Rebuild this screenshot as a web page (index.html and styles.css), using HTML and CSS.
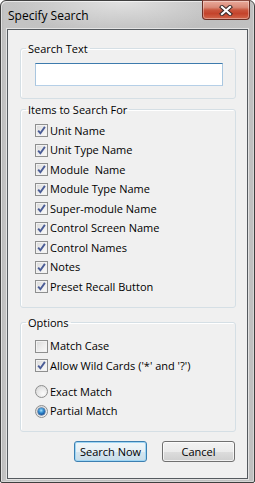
FILE: index.html
```html
<!DOCTYPE html>
<html>
<head>
<meta charset="utf-8">
<link rel="stylesheet" href="styles.css">
</head>
<body>
<div class="window">
  <div class="titlebar">
    <span class="title">Specify Search</span>
    <div class="close">
      <svg width="14" height="11" viewBox="0 0 14 11">
        <path d="M3 2 L11 9 M11 2 L3 9" stroke="#3a2a28" stroke-width="4.2" stroke-linecap="square" fill="none"/>
        <path d="M3 2 L11 9 M11 2 L3 9" stroke="#ffffff" stroke-width="2.2" stroke-linecap="square" fill="none"/>
      </svg>
    </div>
  </div>
  <div class="client">
    <fieldset class="group g-search">
      <legend>Search Text</legend>
      <div class="textbox"></div>
    </fieldset>

    <fieldset class="group g-items">
      <legend>Items to Search For</legend>
      <div class="row"><span class="cb on"><svg viewBox="0 0 11 11"><path d="M2.2 5.6 L4.4 8.3 L8.9 1.9"/></svg></span><span class="lbl">Unit Name</span></div>
      <div class="row"><span class="cb on"><svg viewBox="0 0 11 11"><path d="M2.2 5.6 L4.4 8.3 L8.9 1.9"/></svg></span><span class="lbl">Unit Type Name</span></div>
      <div class="row"><span class="cb on"><svg viewBox="0 0 11 11"><path d="M2.2 5.6 L4.4 8.3 L8.9 1.9"/></svg></span><span class="lbl">Module&nbsp; Name</span></div>
      <div class="row"><span class="cb on"><svg viewBox="0 0 11 11"><path d="M2.2 5.6 L4.4 8.3 L8.9 1.9"/></svg></span><span class="lbl">Module Type Name</span></div>
      <div class="row"><span class="cb on"><svg viewBox="0 0 11 11"><path d="M2.2 5.6 L4.4 8.3 L8.9 1.9"/></svg></span><span class="lbl">Super-module Name</span></div>
      <div class="row"><span class="cb on"><svg viewBox="0 0 11 11"><path d="M2.2 5.6 L4.4 8.3 L8.9 1.9"/></svg></span><span class="lbl">Control Screen Name</span></div>
      <div class="row"><span class="cb on"><svg viewBox="0 0 11 11"><path d="M2.2 5.6 L4.4 8.3 L8.9 1.9"/></svg></span><span class="lbl">Control Names</span></div>
      <div class="row"><span class="cb on"><svg viewBox="0 0 11 11"><path d="M2.2 5.6 L4.4 8.3 L8.9 1.9"/></svg></span><span class="lbl">Notes</span></div>
      <div class="row"><span class="cb on"><svg viewBox="0 0 11 11"><path d="M2.2 5.6 L4.4 8.3 L8.9 1.9"/></svg></span><span class="lbl">Preset Recall Button</span></div>
    </fieldset>

    <fieldset class="group g-options">
      <legend>Options</legend>
      <div class="row"><span class="cb"></span><span class="lbl">Match Case</span></div>
      <div class="row"><span class="cb on"><svg viewBox="0 0 11 11"><path d="M2.2 5.6 L4.4 8.3 L8.9 1.9"/></svg></span><span class="lbl">Allow Wild Cards ('*' and '?')</span></div>
      <div class="radios">
        <div class="row"><span class="rb"></span><span class="lbl">Exact Match</span></div>
        <div class="row"><span class="rb on"><span class="dot"></span></span><span class="lbl">Partial Match</span></div>
      </div>
    </fieldset>

    <div class="buttons">
      <div class="btn default">Search Now</div>
      <div class="btn">Cancel</div>
    </div>
  </div>
</div>
</body>
</html>
```
FILE: styles.css
```css
* { box-sizing: border-box; }
html, body { margin: 0; padding: 0; background: #ffffff; }
body {
  font-family: "Open Sans", "Liberation Sans", sans-serif;
  font-size: 11px;
  color: #000;
}
.window {
  width: 255px;
  height: 483px;
  border: 1px solid #3f3f3f;
  border-radius: 6px 6px 2px 2px;
  padding: 0 6px 3px 6px;
  display: flex;
  flex-direction: column;
  background:
    radial-gradient(ellipse 110px 34px at 48% 0, rgba(255,255,255,0.55), rgba(255,255,255,0) 100%),
    linear-gradient(90deg, #b4b4b4 0, #c4c4c4 3px, #bdbdbd 50%, #c0c0c0 100%);
  box-shadow: inset 1px 1px 0 rgba(255,255,255,0.6), inset -1px -1px 0 rgba(255,255,255,0.35);
}
.titlebar {
  height: 28px;
  display: flex;
  justify-content: space-between;
  align-items: flex-start;
  flex: none;
}
.title {
  margin-top: 7px;
  margin-left: 1px;
  line-height: 15px;
  font-size: 12px;
  color: #000;
}
.close {
  width: 48px;
  height: 20px;
  margin-top: -1px;
  margin-right: -2px;
  border: 1px solid #6b2f25;
  border-top-color: #8a4a40;
  border-radius: 0 0 4px 4px;
  background: linear-gradient(#e9a99a 0, #d98a78 35%, #c9553d 50%, #c4432b 70%, #d2674c 100%);
  box-shadow: inset 0 0 0 1px rgba(255,255,255,0.35);
  display: flex;
  align-items: center;
  justify-content: center;
}
.close svg { display: block; }
.client {
  flex: 1;
  border: 1px solid #555a5f;
  background: #f0f0f0;
  box-shadow: 0 0 0 1px rgba(255,255,255,0.55);
  display: flex;
  flex-direction: column;
}
.group {
  margin: 0 11px 0 12px;
  padding: 0;
  min-inline-size: 0;
  border: 1px solid #d5dfe5;
  border-radius: 3px;
  box-shadow: inset 1px 1px 0 #ffffff;
}
.group legend {
  margin-left: -9px;
  padding: 0 2px;
  line-height: 13px;
  height: 13px;
  font-size: 11px;
}
.g-search { margin-top: 12px; padding: 8px 13px 12px 14px; }
.textbox {
  width: 188px;
  height: 23px;
  background: #fff;
  border: 1px solid #b5cfe7;
  border-top-color: #3d7bad;
  border-left-color: #a9c6df;
  border-right-color: #a9c6df;
}
.g-items { margin-top: 4px; padding: 5px 10px 10px 14px; }
.g-options { margin-top: 8px; padding: 8px 10px 10px 14px; }
.radios { margin-top: 6.5px; }
.row {
  height: 19.5px;
  display: flex;
  align-items: center;
  white-space: nowrap;
}
.lbl { margin-left: 2px; line-height: 14px; }
.cb {
  width: 13px;
  height: 13px;
  flex: none;
  border: 1px solid #8e8f8f;
  background: linear-gradient(135deg, #d8d8d8 0, #ececec 50%, #fafafa 100%);
  box-shadow: inset 0 0 0 1px #f2f2f2;
  display: flex;
  align-items: center;
  justify-content: center;
}
.cb svg {
  width: 11px;
  height: 11px;
  display: block;
}
.cb svg path {
  fill: none;
  stroke: #4a5c96;
  stroke-width: 1.9;
}
.rb {
  width: 13px;
  height: 13px;
  flex: none;
  border-radius: 50%;
  border: 1px solid #8e8f8f;
  background: radial-gradient(circle at 65% 70%, #fbfbfb 0, #e6e6e6 55%, #cfcfcf 100%);
  display: flex;
  align-items: center;
  justify-content: center;
}
.rb .dot {
  width: 7px;
  height: 7px;
  border-radius: 50%;
  background: radial-gradient(circle at 45% 35%, #a9e0fb 0, #3c97d6 35%, #1a5ea8 65%, #0e3c7a 100%);
  box-shadow: 0 0 0 0.5px #1e4a80;
}
.buttons {
  margin-top: 9px;
  margin-right: 12px;
  display: flex;
  justify-content: flex-end;
  gap: 15px;
}
.btn {
  width: 73px;
  height: 21px;
  border: 1px solid #707070;
  border-radius: 3px;
  background: linear-gradient(#f2f2f2 0, #ebebeb 50%, #dddddd 51%, #cfcfcf 100%);
  box-shadow: inset 0 0 0 1px rgba(255,255,255,0.7);
  display: flex;
  align-items: center;
  justify-content: center;
  line-height: 14px;
}
.btn.default {
  border-color: #3c7fb1;
  box-shadow: inset 0 0 0 1px #9fd6f4;
  background: linear-gradient(#f0f6f9 0, #e7f0f5 50%, #d5e5ef 51%, #c8dde9 100%);
}
```
